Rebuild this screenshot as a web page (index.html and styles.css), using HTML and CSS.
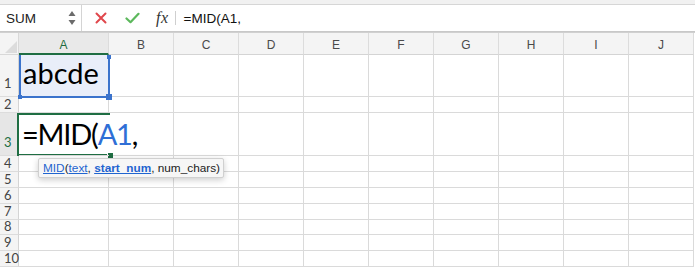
FILE: index.html
```html
<!DOCTYPE html>
<html>
<head>
<meta charset="utf-8">
<link rel="stylesheet" href="styles.css">
</head>
<body>
<div class="app">
  <div class="topstrip"></div>
  <div class="fbar">
    <div class="namebox">
      <span class="name">SUM</span>
      <svg class="spin" width="8" height="16" viewBox="0 0 8 16"><path d="M4 1 L7.5 6 L0.5 6 Z" fill="#6b6b6b"/><path d="M4 15 L7.5 10 L0.5 10 Z" fill="#6b6b6b"/></svg>
    </div>
    <div class="fbtns">
      <svg class="ico" width="12" height="12" viewBox="0 0 12 12"><path d="M1.5 1.5 L10.5 10.5 M10.5 1.5 L1.5 10.5" stroke="#e0474c" stroke-width="2" stroke-linecap="round"/></svg>
      <svg class="ico" width="15" height="12" viewBox="0 0 15 12"><path d="M1.5 6.5 L5.5 10.2 L13.5 1.8" stroke="#5cb85c" stroke-width="2.2" fill="none" stroke-linecap="round" stroke-linejoin="round"/></svg>
      <span class="fx">fx</span>
    </div>
    <div class="sep"></div>
    <div class="ftext">=MID(A1,</div>
  </div>
  <div class="gap"></div>
  <div class="grid">
    <div class="corner"><svg width="12" height="12" viewBox="0 0 12 12"><path d="M12 0 L12 12 L0 12 Z" fill="#dcdcdc"/></svg></div>
    <div class="ch sel">A</div><div class="ch">B</div><div class="ch">C</div><div class="ch">D</div><div class="ch">E</div><div class="ch">F</div><div class="ch">G</div><div class="ch">H</div><div class="ch">I</div><div class="ch">J</div>

    <div class="rh tall">1</div><div class="c a1 big">abcde</div><div class="c"></div><div class="c"></div><div class="c"></div><div class="c"></div><div class="c"></div><div class="c"></div><div class="c"></div><div class="c"></div><div class="c"></div>
    <div class="rh">2</div><div class="c"></div><div class="c"></div><div class="c"></div><div class="c"></div><div class="c"></div><div class="c"></div><div class="c"></div><div class="c"></div><div class="c"></div><div class="c"></div>
    <div class="rh tall act">3</div><div class="c big edit"><span class="etext">=MID(<span class="ref">A1</span>,</span></div><div class="c"></div><div class="c"></div><div class="c"></div><div class="c"></div><div class="c"></div><div class="c"></div><div class="c"></div><div class="c"></div><div class="c"></div>
    <div class="rh">4</div><div class="c"></div><div class="c"></div><div class="c"></div><div class="c"></div><div class="c"></div><div class="c"></div><div class="c"></div><div class="c"></div><div class="c"></div><div class="c"></div>
    <div class="rh">5</div><div class="c"></div><div class="c"></div><div class="c"></div><div class="c"></div><div class="c"></div><div class="c"></div><div class="c"></div><div class="c"></div><div class="c"></div><div class="c"></div>
    <div class="rh">6</div><div class="c"></div><div class="c"></div><div class="c"></div><div class="c"></div><div class="c"></div><div class="c"></div><div class="c"></div><div class="c"></div><div class="c"></div><div class="c"></div>
    <div class="rh">7</div><div class="c"></div><div class="c"></div><div class="c"></div><div class="c"></div><div class="c"></div><div class="c"></div><div class="c"></div><div class="c"></div><div class="c"></div><div class="c"></div>
    <div class="rh">8</div><div class="c"></div><div class="c"></div><div class="c"></div><div class="c"></div><div class="c"></div><div class="c"></div><div class="c"></div><div class="c"></div><div class="c"></div><div class="c"></div>
    <div class="rh">9</div><div class="c"></div><div class="c"></div><div class="c"></div><div class="c"></div><div class="c"></div><div class="c"></div><div class="c"></div><div class="c"></div><div class="c"></div><div class="c"></div>
    <div class="rh">10</div><div class="c"></div><div class="c"></div><div class="c"></div><div class="c"></div><div class="c"></div><div class="c"></div><div class="c"></div><div class="c"></div><div class="c"></div><div class="c"></div>

    <div class="refbox">
      <span class="hdl tr"></span><span class="hdl bl"></span><span class="hdl br"></span>
    </div>
    <div class="actbox"><span class="ghdl"></span></div>
    <div class="tip"><a class="lk">MID</a>(<a class="lk">text</a>, <a class="lk b">start_num</a>, num_chars)</div>
  </div>
</div>
</body>
</html>
```

FILE: styles.css
```css
* { box-sizing: border-box; }
html, body { margin: 0; padding: 0; background: #fff; }
body { width: 695px; height: 267px; overflow: hidden; font-family: "Liberation Sans", Arial, sans-serif; }

.topstrip { height: 5px; background: #f1f1f1; border-bottom: 1px solid #d6d6d6; }

.fbar { height: 26px; display: flex; align-items: center; background: #fff; }
.namebox { width: 82px; height: 100%; display: flex; align-items: center; justify-content: space-between; padding: 0 5px 0 6px; border-right: 1px solid #d4d4d4; }
.name { font-size: 13.5px; color: #222; }
.spin { display: block; }
.fbtns { display: flex; align-items: center; padding-left: 13px; }
.fbtns .ico { display: block; }
.fbtns .ico:first-child { margin-right: 18px; }
.fbtns .ico:nth-child(2) { margin-right: 16px; }
.fx { font-family: "Liberation Serif", "DejaVu Serif", serif; font-style: italic; font-size: 16px; color: #333; letter-spacing: 0.5px; }
.sep { width: 1px; height: 14px; background: #cfcfcf; margin-left: 6px; }
.ftext { font-size: 13.5px; color: #111; padding-left: 8px; }

.gap { height: 2px; border-top: 1px solid #c8c8c8; border-bottom: 1px solid #d0d0d0; box-sizing: content-box; height: 0; }

.grid {
  position: relative;
  display: grid;
  grid-template-columns: 19px 90px repeat(9, 65px);
  grid-template-rows: 22px 42px 16px 43px 16px 16px 15.5px 16px 15.5px 16px 16px;
}
.corner { background: #f4f4f4; border-right: 1px solid #d8d8d8; border-bottom: 1px solid #d8d8d8; display: flex; align-items: flex-end; justify-content: flex-end; padding: 0 1px 1px 0; }
.corner svg { display: block; }
.ch { background: #f4f4f4; border-right: 1px solid #dcdcdc; border-bottom: 1px solid #d4d4d4; font-size: 12px; color: #4a4a4a; display: flex; align-items: center; justify-content: center; padding-top: 3px; }
.ch.sel { background: #e9e9e9; color: #1f6b3f; border-bottom: 2px solid #1f6e43; padding-top: 4px; }
.rh { background: #f4f4f4; border-right: 1px solid #d4d4d4; border-bottom: 1px solid #dcdcdc; font-family: Lato, "Liberation Sans", sans-serif; font-size: 13px; color: #444; display: flex; align-items: flex-end; justify-content: flex-start; padding: 0 0 0 4px; line-height: 15px; }
.rh.tall { padding-bottom: 5px; }
.rh.act { background: #e6e6e6; color: #1f6e43; }
.c { border-right: 1px solid #dadada; border-bottom: 1px solid #dadada; }
.big { font-family: Lato, "Liberation Sans", sans-serif; font-size: 29px; color: #000; display: flex; align-items: flex-end; padding: 0 0 7px 4px; line-height: 32px; }
.a1 { background: #e9eef9; }
.edit { white-space: nowrap; position: relative; z-index: 3; padding-bottom: 5px; padding-left: 3px; border-right: none; }
.etext { background: #fff; letter-spacing: -1.2px; padding-right: 4px; }
.ref { color: #2f6fd6; }

.refbox { position: absolute; left: 19px; top: 22px; width: 91px; height: 43px; border: 2px solid #3b73cc; border-top: none; pointer-events: none; }
.hdl { position: absolute; background: #3b73cc; }
.hdl.tr { right: -3px; top: 0; width: 4px; height: 4px; }
.hdl.bl { left: -3px; bottom: -3px; width: 4px; height: 4px; }
.hdl.br { right: -4px; bottom: -4px; width: 6px; height: 6px; }

.actbox { position: absolute; left: 17px; top: 80px; width: 93px; height: 43px; border: 2px solid #1f6e43; border-right: none; z-index: 2; }
.ghdl { position: absolute; right: -3px; bottom: -4px; width: 6px; height: 5px; background: #1f6e43; border-left: 1px solid #fff; }

.tip { position: absolute; left: 38px; top: 125px; height: 20px; width: 186px; padding: 0 0 0 4px; background: #f6f6f6; border: 1px solid #d0d0d0; border-radius: 2px; box-shadow: 0 2px 6px rgba(0,0,0,0.2); font-size: 11.8px; color: #222; line-height: 18px; white-space: nowrap; z-index: 4; }
.lk { color: #1f64d0; text-decoration: underline; }
.lk.b { font-weight: bold; }
```
